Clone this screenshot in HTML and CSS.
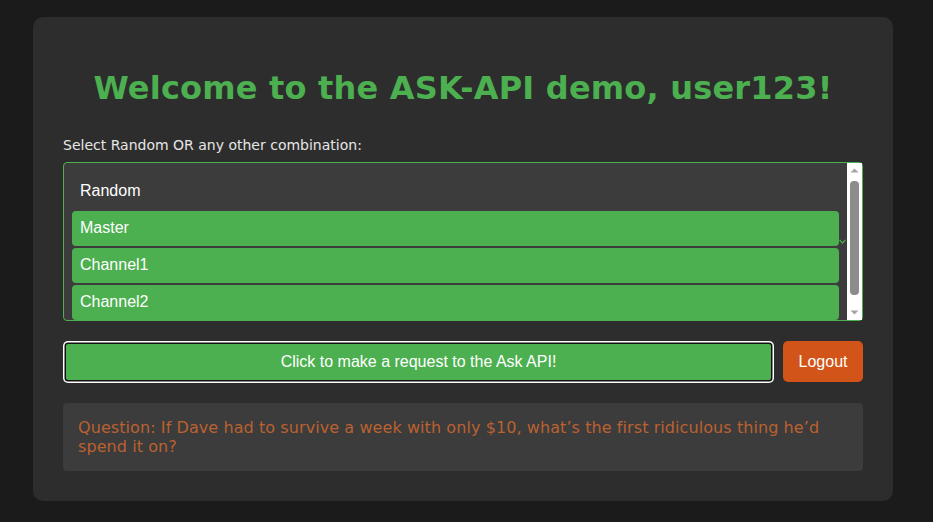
FILE: index.html
```html
<!DOCTYPE html>
<html>
<head>
<meta charset="utf-8">
<link rel="stylesheet" href="styles.css">
</head>
<body>
<div class="card">
  <h1 class="title">Welcome to the ASK-API demo, user123!</h1>
  <label class="label">Select Random OR any other combination:</label>
  <div class="listbox">
    <div class="options">
      <div class="opt">Random</div>
      <div class="opt sel">Master<svg class="tick" width="7" height="5" viewBox="0 0 7 5"><polyline points="0.6,0.8 3.5,4 6.4,0.8" fill="none" stroke="#4caf50" stroke-width="1.2"/></svg></div>
      <div class="opt sel">Channel1</div>
      <div class="opt sel">Channel2</div>
    </div>
    <div class="scrollbar">
      <svg class="arrow" width="15" height="14" viewBox="0 0 15 14"><polygon points="3.5,9.5 7.5,5.5 11.5,9.5" fill="#a3a3a3"/></svg>
      <div class="track"><div class="thumb"></div></div>
      <svg class="arrow" width="15" height="14" viewBox="0 0 15 14"><polygon points="3.5,4.5 7.5,8.5 11.5,4.5" fill="#a3a3a3"/></svg>
    </div>
  </div>
  <div class="actions">
    <button class="ask">Click to make a request to the Ask API!</button>
    <button class="logout">Logout</button>
  </div>
  <div class="question">Question: If Dave had to survive a week with only $10, what’s the first ridiculous thing he’d spend it on?</div>
</div>
</body>
</html>
```
FILE: styles.css
```css
html, body {
  margin: 0;
  background: #1b1b1b;
}
body {
  padding: 17px 0 0 33px;
  height: 522px;
  box-sizing: border-box;
  font-family: "DejaVu Sans", Verdana, sans-serif;
}
.card {
  width: 860px;
  box-sizing: border-box;
  background: #2d2d2d;
  border-radius: 10px;
  padding: 30px;
}
.title {
  margin: 23px 0 30px;
  text-align: center;
  color: #4caf50;
  font-family: "DejaVu Sans", Verdana, sans-serif;
  font-weight: bold;
  font-size: 32px;
  letter-spacing: 0.2px;
  line-height: 37px;
}
.label {
  display: block;
  color: #e6e6e6;
  font-size: 14px;
  line-height: 17px;
  margin-bottom: 8px;
}
.listbox {
  display: flex;
  height: 159px;
  box-sizing: border-box;
  border: 1px solid #4caf50;
  border-radius: 4px;
  background: #3c3c3c;
}
.options {
  flex: 1;
  overflow: hidden;
  padding: 11px 8px 0;
}
.opt {
  position: relative;
  height: 35px;
  line-height: 33px;
  padding: 0 8px;
  margin-bottom: 2px;
  border-radius: 4px;
  color: #fff;
  font-family: "Liberation Sans", Arial, sans-serif;
  font-size: 16px;
}
.opt.sel {
  background: #4caf50;
}
.tick {
  position: absolute;
  right: -7px;
  top: 28px;
}
.scrollbar {
  width: 15px;
  display: flex;
  flex-direction: column;
  background: #fff;
}
.arrow {
  display: block;
  flex: none;
}
.track {
  flex: 1;
  padding: 4px 3px 11px;
}
.thumb {
  height: 100%;
  border-radius: 4px;
  background: #8c8c8c;
}
.actions {
  display: flex;
  gap: 9px;
  margin-top: 20px;
}
.ask, .logout {
  height: 42px;
  border: none;
  border-radius: 5px;
  color: #fff;
  font-family: "Liberation Sans", Arial, sans-serif;
  font-size: 16px;
  cursor: pointer;
}
.ask {
  flex: 1;
  background: #4caf50;
  box-shadow: inset 0 0 0 1.5px #fff, inset 0 0 0 3px #111;
}
.logout {
  width: 80px;
  height: 41px;
  background: #d35418;
}
.question {
  margin-top: 20px;
  background: #3c3c3c;
  border-radius: 4px;
  padding: 15px;
  color: #bb6130;
  font-size: 16px;
  letter-spacing: 0.08px;
  line-height: 19px;
}
```
